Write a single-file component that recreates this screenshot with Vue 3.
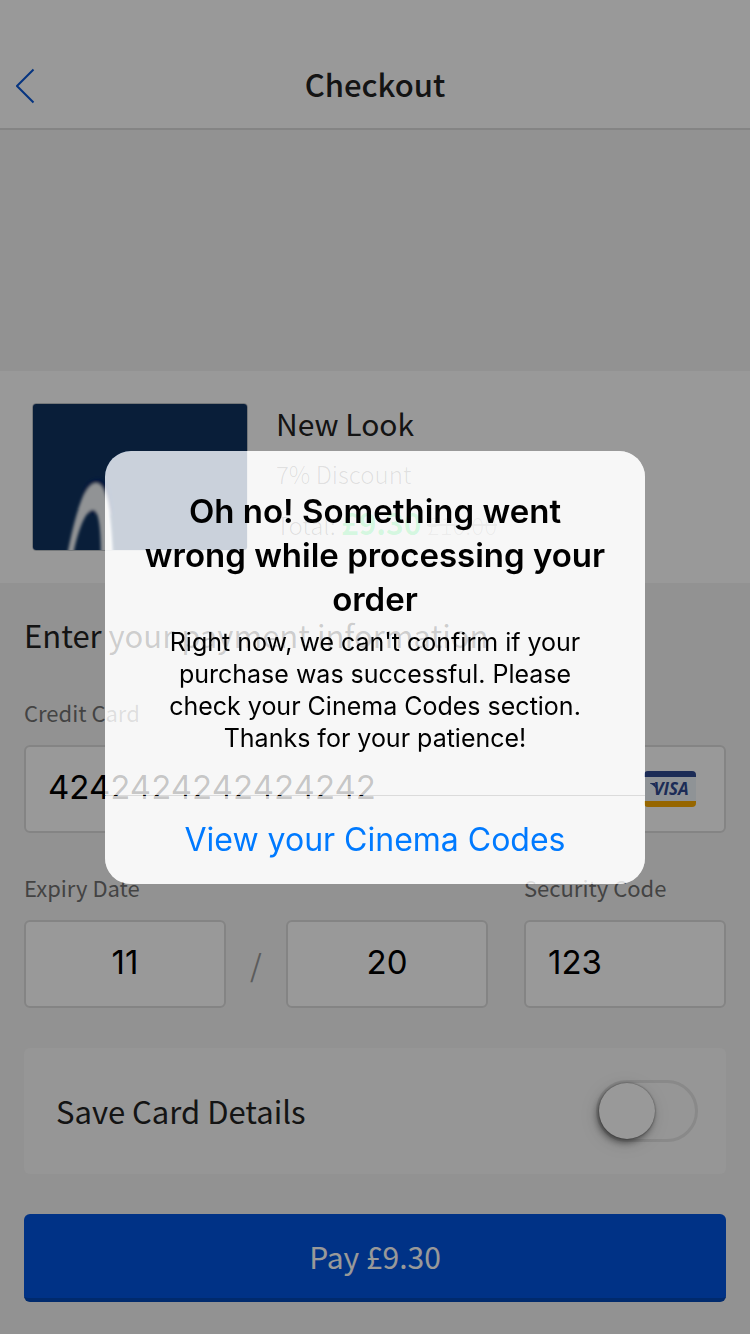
<script setup>
import { ref } from 'vue'

const cardNumber = ref('4242424242424242')
const month = ref('11')
const year = ref('20')
const securityCode = ref('123')
const saveCard = ref(false)
</script>

<template>
  <div class="screen">
    <header class="nav">
      <button class="back" type="button" aria-label="Back">
        <svg width="20" height="36" viewBox="0 0 20 36" fill="none" stroke="#0a58d6" stroke-width="2">
          <path d="M17.5 1.5 L1 18 L17.5 34.5" />
        </svg>
      </button>
      <h1>Checkout</h1>
    </header>

    <main>
      <section class="product">
        <svg class="thumb" viewBox="0 0 214 146" preserveAspectRatio="xMidYMid slice" aria-hidden="true">
          <defs>
            <filter id="soft" x="-20%" y="-20%" width="140%" height="140%">
              <feGaussianBlur stdDeviation="1.6" />
            </filter>
          </defs>
          <rect width="214" height="146" fill="#0f3360" />
          <g filter="url(#soft)">
            <path d="M49 92 C53 72 70 68 76 84 L80 110 L44 110 Z" fill="#07226c" opacity=".7" />
            <path d="M34 152 C41 116 50 80 63 79 C74 79 78 108 80 152 L68 152 C68 126 66 106 60 106 C52 106 44 130 40 152 Z" fill="#f2f5f8" />
          </g>
        </svg>
        <div class="details">
          <h2>New Look</h2>
          <p>7% Discount</p>
          <p class="total">Total: <strong>£9.30</strong> <del>£10.00</del></p>
        </div>
      </section>

      <form class="payment" @submit.prevent>
        <h2>Enter your payment information</h2>

        <label for="card">Credit Card</label>
        <div class="card-field">
          <input id="card" v-model="cardNumber" class="box" type="text" inputmode="numeric" />
          <svg class="visa" width="52" height="36" viewBox="0 0 52 36" role="img" aria-label="Visa">
            <rect width="52" height="36" rx="4" fill="#eef5fb" />
            <path d="M0 6 V4 A4 4 0 0 1 4 0 H48 A4 4 0 0 1 52 4 V6 Z" fill="#304a90" />
            <path d="M0 30 V32 A4 4 0 0 0 4 36 H48 A4 4 0 0 0 52 32 V30 Z" fill="#fbab00" />
            <text x="27" y="24" text-anchor="middle">VISA</text>
            <path d="M6 12 H11 L13 19 Q10 14 6 12.5 Z" fill="#304a90" />
          </svg>
        </div>

        <div class="row">
          <label class="expiry-label" for="month">Expiry Date</label>
          <label class="code-label" for="code">Security Code</label>
          <input id="month" v-model="month" class="box center month" type="text" inputmode="numeric" />
          <span class="slash">/</span>
          <input v-model="year" class="box center year" type="text" inputmode="numeric" aria-label="Expiry year" />
          <input id="code" v-model="securityCode" class="box code" type="text" inputmode="numeric" />
        </div>

        <div class="save">
          <label for="save">Save Card Details</label>
          <input id="save" v-model="saveCard" class="toggle" type="checkbox" role="switch" />
        </div>

        <button class="pay" type="submit">Pay £9.30</button>
      </form>
    </main>

    <div class="overlay">
      <div class="alert" role="alertdialog" aria-labelledby="alert-title" aria-describedby="alert-text">
        <div class="message">
          <h2 id="alert-title">Oh no! Something went wrong while processing your order</h2>
          <p id="alert-text">Right now, we can't confirm if your purchase was successful. Please check your Cinema Codes section. Thanks for your patience!</p>
        </div>
        <button type="button">View your Cinema Codes</button>
      </div>
    </div>
  </div>
</template>

<style>
body {
  margin: 0;
  background: #f4f4f4;
}
</style>

<style scoped>
* {
  box-sizing: border-box;
}

.screen {
  min-height: 100vh;
  background: #f4f4f4;
  color: #222;
  font-family: "Noto Sans CJK SC", "Noto Sans", sans-serif;
}

h1,
h2,
p {
  margin: 0;
}

button {
  border: 0;
  background: none;
  font: inherit;
}

.nav {
  display: grid;
  grid-template-columns: 80px 1fr 80px;
  align-items: center;
  padding-top: 40px;
  height: 130px;
  border-bottom: 2px solid #dcdcdc;
  background: #fff;
}

.nav h1 {
  font-size: 31px;
  line-height: 48px;
  font-weight: 500;
  text-align: center;
}

.back {
  display: flex;
  padding: 4px 16px 0;
}

.product {
  display: flex;
  gap: 28px;
  margin-top: 241px;
  padding: 32px;
  background: #fff;
}

.thumb {
  width: 216px;
  height: 148px;
  border: 1px solid #c4c8cc;
  border-radius: 4px;
}

.details {
  color: #777;
  font-size: 24px;
  font-weight: 300;
  line-height: 50px;
}

.details h2 {
  margin-bottom: 6px;
  color: #222;
  font-size: 30px;
  font-weight: 400;
  line-height: 40px;
}

.details .total {
  line-height: 52px;
}

.total strong {
  color: #44dc75;
  font-size: 30px;
  font-weight: 700;
  line-height: 30px;
}

.total del {
  color: #aaa;
}

.payment {
  padding: 28px 24px 32px;
}

.payment h2 {
  margin-bottom: 35px;
  font-size: 31px;
  font-weight: 400;
  line-height: 48px;
}

.payment label {
  display: block;
  color: #717171;
  font-size: 22px;
  line-height: 36px;
}

.box {
  display: block;
  width: 100%;
  min-width: 0;
  height: 88px;
  padding: 0 22px 4px;
  border: 2px solid #dcdcdc;
  border-radius: 6px;
  background: #fff;
  color: #000;
  font-family: Inter, sans-serif;
  font-size: 33px;
}

.center {
  text-align: center;
}

.card-field {
  position: relative;
  margin: 15px 0 36px;
}

.visa {
  position: absolute;
  top: 26px;
  right: 30px;
}

.visa text {
  fill: #304a90;
  font: italic bold 17px "Open Sans", sans-serif;
}

.row {
  display: grid;
  grid-template-columns: 1fr 60px 1fr 36px 1fr;
  row-gap: 15px;
}

.expiry-label {
  grid-column: 1 / 4;
}

.code-label {
  grid-column: 5;
}

.month {
  grid-column: 1;
}

.year {
  grid-column: 3;
}

.code {
  grid-column: 5;
}

.slash {
  align-self: center;
  color: #999;
  font-size: 30px;
  text-align: center;
}

.save {
  display: flex;
  align-items: center;
  justify-content: space-between;
  margin: 40px 0;
  padding: 32px 28px 32px 32px;
  border-radius: 6px;
  background: #fafafa;
}

.save label {
  color: #222;
  font-size: 31px;
  line-height: 48px;
}

.toggle {
  appearance: none;
  width: 102px;
  height: 62px;
  margin: 0;
  border: 3px solid #e4e4e4;
  border-radius: 31px;
}

.toggle::before {
  content: "";
  display: block;
  width: 56px;
  height: 56px;
  border-radius: 50%;
  background: #fff;
  box-shadow: 0 0 2px rgba(0, 0, 0, .5), -2px 4px 6px rgba(0, 0, 0, .4), -2px 4px 18px rgba(0, 0, 0, .15);
}

.toggle:checked::before {
  margin-left: auto;
}

.pay {
  display: block;
  width: 100%;
  height: 88px;
  border-bottom: 4px solid #0046b6;
  border-radius: 6px;
  background: #0054df;
  color: #fff;
  font-size: 30px;
}

.overlay {
  position: fixed;
  inset: 0;
  display: flex;
  align-items: center;
  justify-content: center;
  padding: 24px;
  background: rgba(0, 0, 0, .4);
}

.alert {
  display: flex;
  flex-direction: column;
  gap: 1px;
  width: 540px;
  overflow: hidden;
  border-radius: 26px;
  backdrop-filter: brightness(1.9);
  background: rgba(0, 0, 0, .14);
  color: #000;
  font-family: Inter, sans-serif;
  text-align: center;
}

.message {
  padding: 38px 32px 41px;
  background: rgba(255, 255, 255, .78);
}

.message h2 {
  font-size: 33px;
  font-weight: 600;
  line-height: 44px;
}

.message p {
  padding: 5px 24px 0;
  font-size: 25px;
  line-height: 32px;
}

.alert button {
  height: 88px;
  background: rgba(255, 255, 255, .78);
  color: #007aff;
  font-size: 32px;
}
</style>
